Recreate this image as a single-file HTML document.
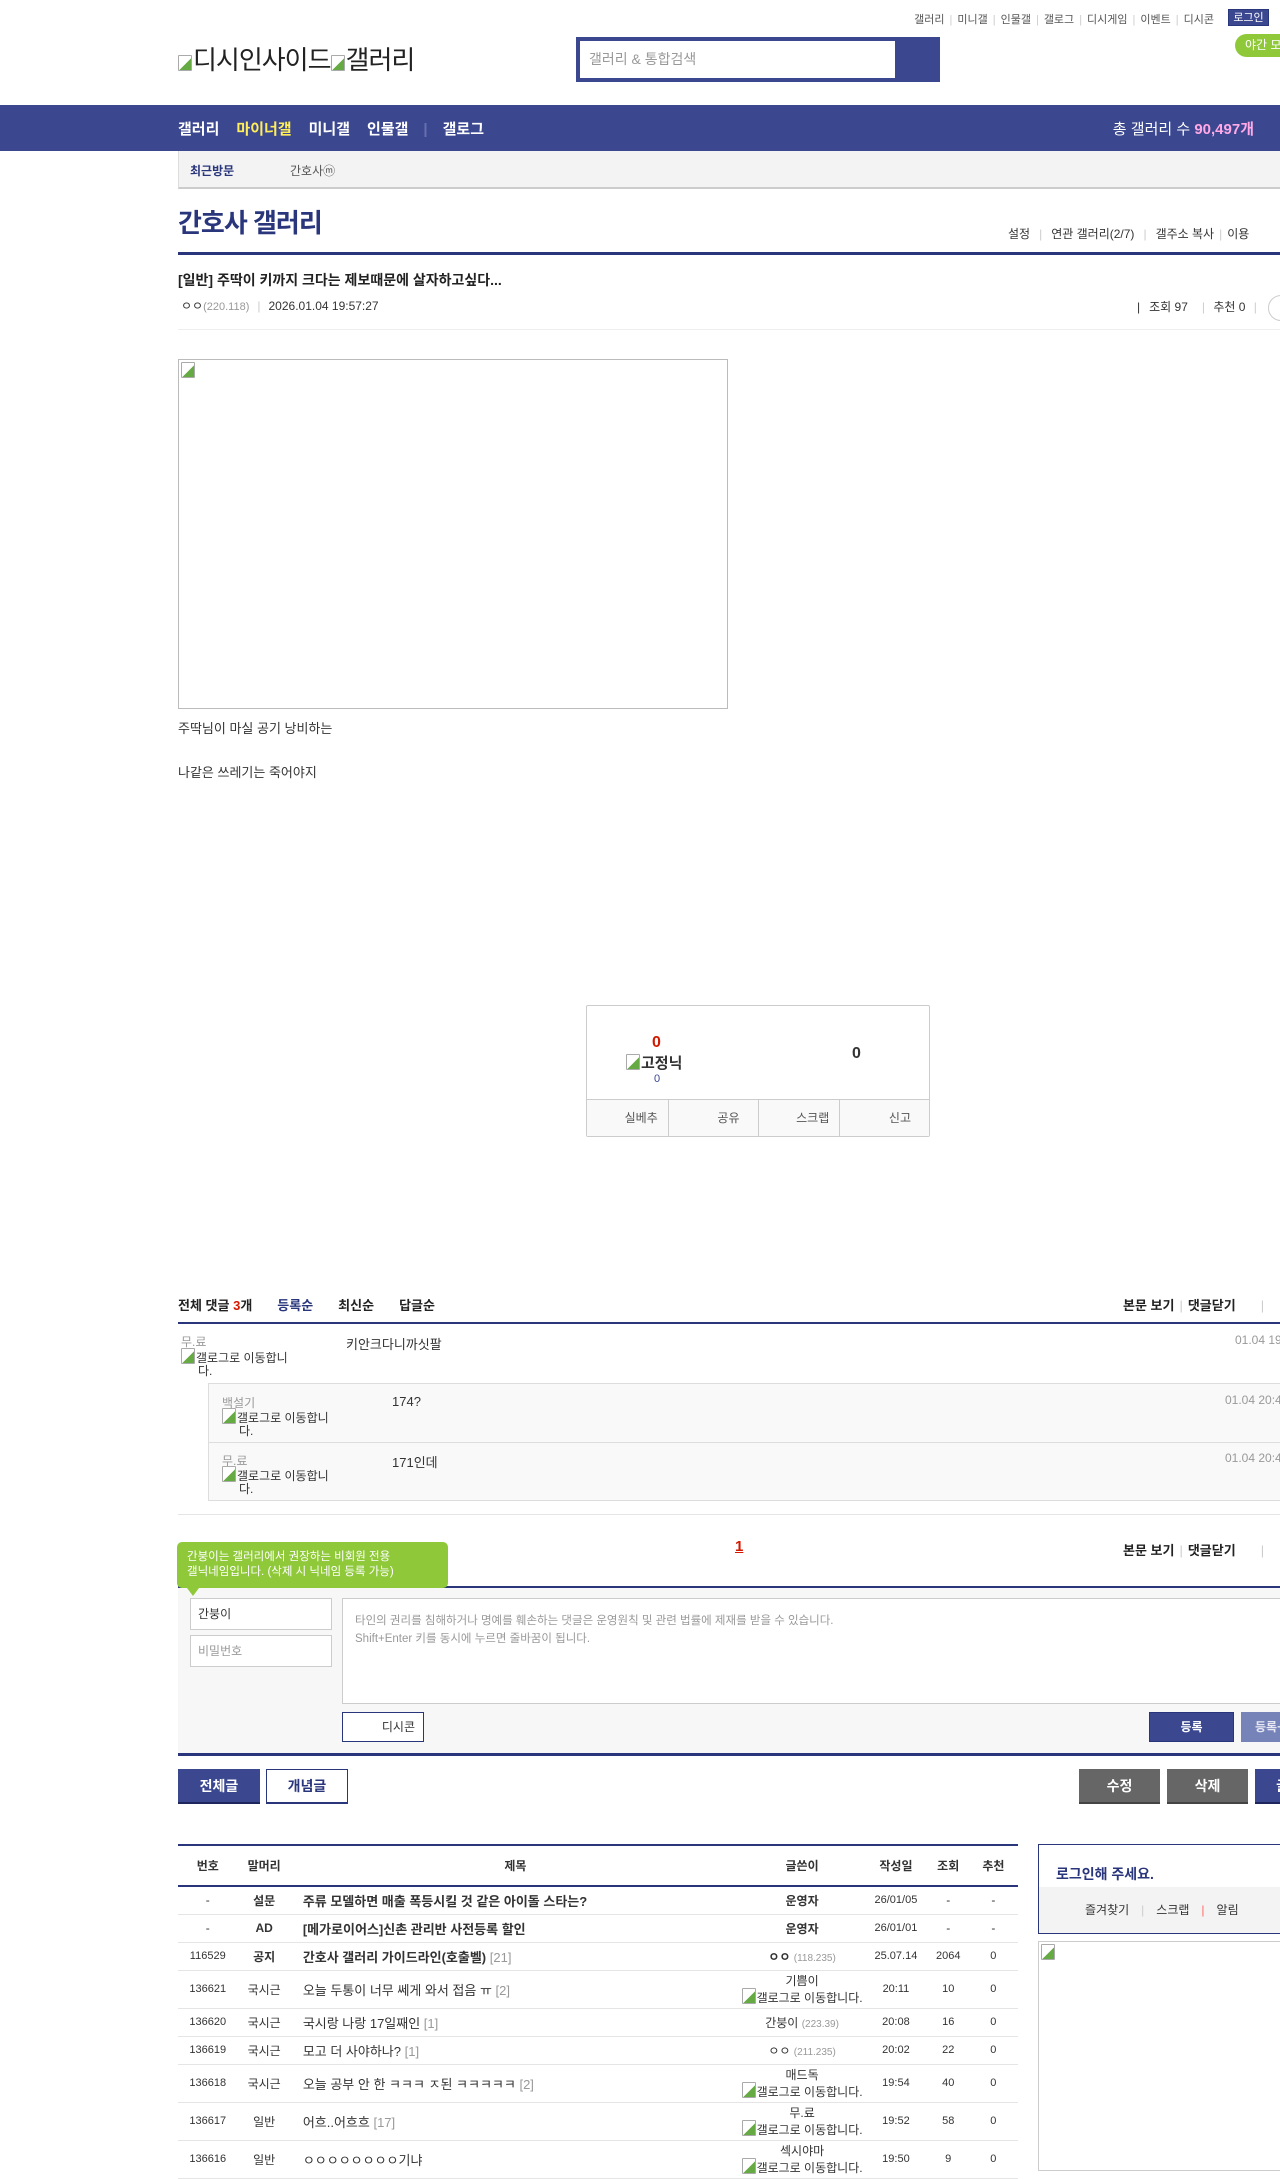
<!DOCTYPE html>
<html><head><meta charset="utf-8">
<style>
*{margin:0;padding:0;box-sizing:border-box}
body{width:1280px;height:2149px;overflow:hidden;position:relative;background:#fff;font-family:"Liberation Sans","Noto Sans CJK KR",sans-serif;font-size:12px;color:#333}
.a{position:absolute;white-space:nowrap}
.navy{color:#29367c}
.bi{display:inline-block;width:14px;height:16px;border:1px solid #aaa;border-radius:1px;vertical-align:-2px;background:linear-gradient(135deg,#fff 55%,#6a4 56%);margin-right:1px}
.sep{color:#ccc;margin:0 5px}
.btn{position:absolute;color:#fff;font-weight:bold;font-size:14px;text-align:center;line-height:34px;height:35px;border-bottom:2px solid #1d275e}
table{border-collapse:collapse}
td{text-align:center;font-size:12px;color:#333;border-bottom:1px solid #e5e5e5}
</style></head><body>
<div class="a" style="right:66px;top:11px;font-size:11px;color:#555">갤러리<span class="sep">|</span>미니갤<span class="sep">|</span>인물갤<span class="sep">|</span>갤로그<span class="sep">|</span>디시게임<span class="sep">|</span>이벤트<span class="sep">|</span>디시콘</div>
<div class="a" style="left:1228px;top:9px;width:41px;height:17px;background:#3b4890;color:#fff;font-size:11px;text-align:center;line-height:17px;border:1px solid #29367c">로그인</div>
<div class="a" style="left:1235px;top:34px;width:60px;height:23px;background:#8fc93a;border-radius:12px;color:#fff;font-size:12px;line-height:23px;padding-left:10px">야간 모드</div>
<div class="a" style="left:178px;top:40px;font-size:26px;color:#222;letter-spacing:-1px"><span class="bi"></span>디시인사이드<span class="bi"></span>갤러리</div>
<div class="a" style="left:576px;top:37px;width:364px;height:45px;background:#3b4890"></div>
<div class="a" style="left:580px;top:41px;width:315px;height:37px;background:#fff;color:#999;font-size:14px;line-height:37px;padding-left:9px">갤러리 &amp; 통합검색</div>
<div class="a" style="left:0;top:105px;width:1280px;height:46px;background:#3b4890"></div>
<div class="a" style="left:178px;top:118px;font-size:15px;font-weight:bold;color:#fff">갤러리<span style="color:#ffed59;margin-left:17px">마이너갤</span><span style="margin-left:17px">미니갤</span><span style="margin-left:17px">인물갤</span><span style="color:#6670b0;margin:0 15px">|</span>갤로그</div>
<div class="a" style="right:26px;top:118px;font-size:15px;color:#fff">총 갤러리 수 <b style="color:#ffa9e6">90,497개</b></div>
<div class="a" style="left:178px;top:151px;width:1102px;height:38px;background:#f3f3f3;border-left:1px solid #ddd;border-bottom:2px solid #ccc"></div>
<div class="a navy" style="left:190px;top:162px;font-weight:bold;font-size:12px">최근방문</div>
<div class="a" style="left:290px;top:162px;color:#555">간호사ⓜ</div>
<div class="a navy" style="left:178px;top:203px;font-size:26px;font-weight:bold;letter-spacing:-1px">간호사 갤러리</div>
<div class="a" style="left:1008px;top:225px;color:#333">설정<span class="sep" style="margin:0 9px">|</span>연관 갤러리(2/7)<span class="sep" style="margin:0 9px">|</span>갤주소 복사<span class="sep">|</span>이용</div>
<div class="a" style="left:178px;top:252px;width:1102px;height:3px;background:#29367c"></div>
<div class="a" style="left:178px;top:270px;font-size:14px;font-weight:bold;color:#222">[일반] 주딱이 키까지 크다는 제보때문에 살자하고싶다...</div>
<div class="a" style="left:181px;top:297px;color:#333">ㅇㅇ<span style="color:#999;font-size:11px">(220.118)</span><span class="sep" style="margin:0 8px">|</span>2026.01.04 19:57:27</div>
<div class="a" style="left:1137px;top:298px;color:#333">|<span style="margin:0 9px">조회 97</span><span class="sep">|</span> 추천 0 <span class="sep">|</span></div>
<div class="a" style="left:1268px;top:295px;width:26px;height:26px;border:1px solid #ccc;border-radius:50%"></div>
<div class="a" style="left:178px;top:329px;width:1102px;height:1px;background:#eee"></div>
<div class="a" style="left:178px;top:359px;width:550px;height:350px;border:1px solid #bbb"><span class="bi" style="margin:2px"></span></div>
<div class="a" style="left:178px;top:718px;font-size:13px">주딱님이 마실 공기 낭비하는</div>
<div class="a" style="left:178px;top:762px;font-size:13px">나같은 쓰레기는 죽어야지</div>
<div class="a" style="left:586px;top:1005px;width:344px;height:132px;border:1px solid #ccc;border-radius:2px"></div>
<div class="a" style="left:652px;top:1034px;color:#d31900;font-weight:bold;font-size:16px">0</div>
<div class="a" style="left:626px;top:1052px;font-size:15px;font-weight:bold;color:#333"><span class="bi"></span>고정닉</div>
<div class="a" style="left:654px;top:1073px;color:#3b4890;font-size:11px">0</div>
<div class="a" style="left:852px;top:1045px;color:#333;font-weight:bold;font-size:16px">0</div>
<div class="a" style="left:587px;top:1099px;width:342px;height:37px;background:#f9f9f9;border-top:1px solid #ccc;display:flex;color:#555">
<div style="flex:1;border-right:1px solid #ccc;text-align:right;padding-right:10px;line-height:36px">실베추</div>
<div style="flex:1;border-right:1px solid #ccc;text-align:right;padding-right:18px;line-height:36px">공유</div>
<div style="flex:1;border-right:1px solid #ccc;text-align:right;padding-right:10px;line-height:36px">스크랩</div>
<div style="flex:1;text-align:right;padding-right:18px;line-height:36px">신고</div></div>
<div class="a" style="left:178px;top:1295px;font-weight:bold;font-size:13px;color:#222">전체 댓글 <span style="color:#d31900">3</span>개<span class="navy" style="margin-left:25px">등록순</span><span style="margin-left:25px">최신순</span><span style="margin-left:25px">답글순</span></div>
<div class="a" style="left:1123px;top:1295px;font-weight:bold;font-size:13px;color:#222">본문 보기<span class="sep" style="font-weight:normal">|</span>댓글닫기<span class="sep" style="font-weight:normal;margin-left:25px">|</span></div>
<div class="a" style="left:178px;top:1322px;width:1102px;height:2px;background:#29367c"></div>
<div class="a" style="left:181px;top:1333px;color:#999;font-size:12px">무.료</div>
<div class="a" style="left:181px;top:1348px;font-size:12px;line-height:13px;color:#333"><span class="bi"></span>갤로그로 이동합니<br><span style="margin-left:17px">다.</span></div>
<div class="a" style="left:346px;top:1334px;font-size:13px">키안크다니까싯팔</div>
<div class="a" style="left:1235px;top:1333px;color:#999">01.04 19:53</div>
<div class="a" style="left:208px;top:1383px;width:1072px;height:118px;background:#f9f9f9;border:1px solid #ddd;border-right:none"></div>
<div class="a" style="left:208px;top:1442px;width:1072px;height:1px;background:#ddd"></div>
<div class="a" style="left:222px;top:1394px;color:#999">백설기</div>
<div class="a" style="left:222px;top:1408px;line-height:13px"><span class="bi"></span>갤로그로 이동합니<br><span style="margin-left:17px">다.</span></div>
<div class="a" style="left:392px;top:1394px;font-size:13px">174?</div>
<div class="a" style="left:1225px;top:1393px;color:#999">01.04 20:41</div>
<div class="a" style="left:222px;top:1452px;color:#999">무.료</div>
<div class="a" style="left:222px;top:1466px;line-height:13px"><span class="bi"></span>갤로그로 이동합니<br><span style="margin-left:17px">다.</span></div>
<div class="a" style="left:392px;top:1452px;font-size:13px">171인데</div>
<div class="a" style="left:1225px;top:1451px;color:#999">01.04 20:42</div>
<div class="a" style="left:178px;top:1514px;width:1102px;height:1px;background:#e5e5e5"></div>
<div class="a" style="left:735px;top:1538px;color:#d31900;font-weight:bold;font-size:15px;text-decoration:underline">1</div>
<div class="a" style="left:1123px;top:1540px;font-weight:bold;font-size:13px;color:#222">본문 보기<span class="sep" style="font-weight:normal">|</span>댓글닫기<span class="sep" style="font-weight:normal;margin-left:25px">|</span></div>
<div class="a" style="left:178px;top:1586px;width:1102px;height:2px;background:#29367c"></div>
<div class="a" style="left:178px;top:1588px;width:1102px;height:165px;background:#f7f7f7"></div>
<div class="a" style="left:177px;top:1542px;width:271px;height:46px;background:#8fc93a;border-radius:5px;color:#fff;font-size:11.5px;line-height:15px;padding:8px 10px">간붕이는 갤러리에서 권장하는 비회원 전용<br>갤닉네임입니다. (삭제 시 닉네임 등록 가능)</div>
<div class="a" style="left:187px;top:1588px;width:0;height:0;border:6px solid transparent;border-top:8px solid #8fc93a"></div>
<div class="a" style="left:190px;top:1598px;width:142px;height:32px;background:#fff;border:1px solid #ccc;line-height:30px;padding-left:7px;font-size:12px">간붕이</div>
<div class="a" style="left:190px;top:1635px;width:142px;height:32px;background:#fff;border:1px solid #ccc;line-height:30px;padding-left:7px;color:#999">비밀번호</div>
<div class="a" style="left:342px;top:1598px;width:950px;height:106px;background:#fff;border:1px solid #ccc;padding:13px 12px;color:#999;font-size:11.5px;line-height:18px">타인의 권리를 침해하거나 명예를 훼손하는 댓글은 운영원칙 및 관련 법률에 제재를 받을 수 있습니다.<br>Shift+Enter 키를 동시에 누르면 줄바꿈이 됩니다.</div>
<div class="a" style="left:342px;top:1712px;width:82px;height:30px;background:#fff;border:1px solid #29367c;text-align:right;padding-right:8px;line-height:28px">디시콘</div>
<div class="a" style="left:1149px;top:1712px;width:85px;height:30px;background:#3b4890;border:1px solid #29367c;color:#fff;text-align:center;line-height:28px;font-weight:bold">등록</div>
<div class="a" style="left:1241px;top:1712px;width:60px;height:30px;background:#7683b8;color:#e8e8f5;padding-left:14px;line-height:30px;font-weight:bold">등록+추천</div>
<div class="a" style="left:178px;top:1753px;width:1102px;height:3px;background:#29367c"></div>
<div class="btn" style="left:178px;top:1769px;width:82px;background:#3b4890">전체글</div>
<div class="btn" style="left:266px;top:1769px;width:82px;background:#fff;color:#29367c;border:1px solid #29367c;border-bottom:2px solid #29367c;line-height:32px">개념글</div>
<div class="btn" style="left:1079px;top:1769px;width:81px;background:#666;border-bottom-color:#444">수정</div>
<div class="btn" style="left:1167px;top:1769px;width:81px;background:#666;border-bottom-color:#444">삭제</div>
<div class="btn" style="left:1255px;top:1769px;width:81px;background:#3b4890">글쓰기</div>
<div class="a" style="left:178px;top:1844px;width:840px;height:2px;background:#29367c"></div>
<table class="a" style="left:178px;top:1846px;width:840px">
<colgroup><col style="width:58px"><col style="width:52px"><col style="width:438px"><col style="width:102px"><col style="width:62px"><col style="width:40px"><col style="width:48px"></colgroup>
<tr style="height:40px"><td style="font-weight:bold;border-bottom:2px solid #29367c">번호</td><td style="font-weight:bold;border-bottom:2px solid #29367c">말머리</td><td style="font-weight:bold;border-bottom:2px solid #29367c">제목</td><td style="font-weight:bold;border-bottom:2px solid #29367c">글쓴이</td><td style="font-weight:bold;border-bottom:2px solid #29367c">작성일</td><td style="font-weight:bold;border-bottom:2px solid #29367c">조회</td><td style="font-weight:bold;border-bottom:2px solid #29367c">추천</td></tr>
<tr style="height:28px"><td>-</td><td><b>설문</b></td><td style="text-align:left;padding-left:12px;font-weight:bold;font-size:13px">주류 모델하면 매출 폭등시킬 것 같은 아이돌 스타는?</td><td><b>운영자</b></td><td style="font-size:11px">26/01/05</td><td>-</td><td>-</td></tr>
<tr style="height:28px"><td>-</td><td><b>AD</b></td><td style="text-align:left;padding-left:12px;font-weight:bold;font-size:13px">[메가로이어스]신촌 관리반 사전등록 할인</td><td><b>운영자</b></td><td style="font-size:11px">26/01/01</td><td>-</td><td>-</td></tr>
<tr style="height:28px"><td style="font-size:11px">116529</td><td><b>공지</b></td><td style="text-align:left;padding-left:12px;font-weight:bold;font-size:13px">간호사 갤러리 가이드라인(호출벨) <span style="color:#999;font-weight:normal">[21]</span></td><td><b>ㅇㅇ</b> <span style="color:#999;font-size:10px">(118.235)</span></td><td style="font-size:11px">25.07.14</td><td style="font-size:11px">2064</td><td style="font-size:11px">0</td></tr>
<tr style="height:38px"><td style="font-size:11px">136621</td><td>국시근</td><td style="text-align:left;padding-left:12px;font-size:13px">오늘 두통이 너무 쎄게 와서 접음 ㅠ <span style="color:#999">[2]</span></td><td style="line-height:14px">기쁨이<br><span class="bi"></span>갤로그로 이동합니다.</td><td style="font-size:11px">20:11</td><td style="font-size:11px">10</td><td style="font-size:11px">0</td></tr>
<tr style="height:28px"><td style="font-size:11px">136620</td><td>국시근</td><td style="text-align:left;padding-left:12px;font-size:13px">국시랑 나랑 17일째인 <span style="color:#999">[1]</span></td><td>간붕이 <span style="color:#999;font-size:10px">(223.39)</span></td><td style="font-size:11px">20:08</td><td style="font-size:11px">16</td><td style="font-size:11px">0</td></tr>
<tr style="height:28px"><td style="font-size:11px">136619</td><td>국시근</td><td style="text-align:left;padding-left:12px;font-size:13px">모고 더 사야하나? <span style="color:#999">[1]</span></td><td>ㅇㅇ <span style="color:#999;font-size:10px">(211.235)</span></td><td style="font-size:11px">20:02</td><td style="font-size:11px">22</td><td style="font-size:11px">0</td></tr>
<tr style="height:38px"><td style="font-size:11px">136618</td><td>국시근</td><td style="text-align:left;padding-left:12px;font-size:13px">오늘 공부 안 한 ㅋㅋㅋ ㅈ된 ㅋㅋㅋㅋㅋ <span style="color:#999">[2]</span></td><td style="line-height:14px">매드독<br><span class="bi"></span>갤로그로 이동합니다.</td><td style="font-size:11px">19:54</td><td style="font-size:11px">40</td><td style="font-size:11px">0</td></tr>
<tr style="height:38px"><td style="font-size:11px">136617</td><td>일반</td><td style="text-align:left;padding-left:12px;font-size:13px">어흐..어흐흐 <span style="color:#999">[17]</span></td><td style="line-height:14px">무.료<br><span class="bi"></span>갤로그로 이동합니다.</td><td style="font-size:11px">19:52</td><td style="font-size:11px">58</td><td style="font-size:11px">0</td></tr>
<tr style="height:38px"><td style="font-size:11px">136616</td><td>일반</td><td style="text-align:left;padding-left:12px;font-size:13px">ㅇㅇㅇㅇㅇㅇㅇㅇ기냐</td><td style="line-height:14px">섹시야마<br><span class="bi"></span>갤로그로 이동합니다.</td><td style="font-size:11px">19:50</td><td style="font-size:11px">9</td><td style="font-size:11px">0</td></tr>
</table>
<div class="a" style="left:1038px;top:1844px;width:260px;height:90px;border:1px solid #29367c;border-right:none"></div>
<div class="a navy" style="left:1056px;top:1864px;font-weight:bold;font-size:14px">로그인해 주세요.</div>
<div class="a" style="left:1039px;top:1887px;width:241px;height:46px;background:#f3f3f3;padding-left:46px;line-height:46px;font-size:12px;color:#333">즐겨찾기<span class="sep" style="margin:0 12px">|</span>스크랩<span class="sep" style="margin:0 12px;color:#f66">|</span>알림</div>
<div class="a" style="left:1038px;top:1941px;width:260px;height:230px;border:1px solid #ccc"><span class="bi" style="margin:2px"></span></div>
</body></html>
